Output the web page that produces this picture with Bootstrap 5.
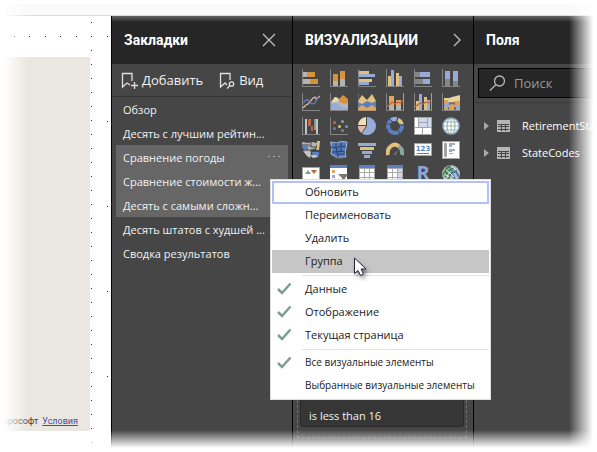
<!DOCTYPE html>
<html lang="ru">
<head>
<meta charset="utf-8">
<meta name="viewport" content="width=device-width, initial-scale=1">
<title>Закладки</title>
<link href="https://cdn.jsdelivr.net/npm/bootstrap@5.3.0/dist/css/bootstrap.min.css" rel="stylesheet">
<style>
body { font-family: "Open Sans", "Noto Sans", sans-serif; font-size: 12px; line-height: 24px; background: #fff; }
button { font: inherit; }
.window-frame { min-height: 100vh; padding: 4px; }
.top-strip { height: 12px; background: #fafafa; border-bottom: 1px solid #dcdcdc; }
.pane { background: #464646; color: #f2f2f2; border-left: 1px solid #000; }
.pane-head { height: 48px; padding: 0 12px; background: linear-gradient(#666, #262626 6px); }
.pane-title { font: 700 14px/24px Roboto, sans-serif; color: #fff; margin: 0; }
.pane-head svg { display: block; }
.plain-btn { background: none; border: 0; padding: 0; color: inherit; }

.report-canvas { width: 107px; background: #fff; overflow: hidden; }
.report-canvas svg.grid-dots { position: absolute; left: 0; top: 0; width: 107px; height: 100%; }
.report-page { width: 86px; margin: 41px 0 17px; padding-right: 12px; background: #eae7e0; font: 9px/20px Roboto, sans-serif; color: #444; }
.report-links { gap: 4px; }
.report-page a { color: #4a4aa0; }

.pane-bookmarks { width: 181px; }
.bookmark-tools { height: 33px; padding: 0 9px; border-bottom: 1px solid #363636; font-size: 13px; }
.bookmark-list { padding: 0 4px; font-size: 11px; line-height: 26px; }
.bookmark-item { display: flex; width: 100%; height: 24px; padding: 0 7px; text-align: left; }
.bookmark-item.active { background: #666; }

.pane-visuals { width: 181px; }
.visual-grid { display: grid; grid-template-columns: repeat(6, 18px); gap: 6px 10px; padding: 5px 9px; }
.visual-grid button { height: 18px; }
.visual-grid svg { display: block; width: 18px; height: 18px; }
.filter-zone { margin: 0 6px 10px 4px; padding: 0 2px 10px; border: 1px dashed #6e6e6e; }
.filter-card { min-height: 120px; padding: 0 8px; background: #363636; border: 1px solid #2a2a2a; border-radius: 3px; font-size: 11px; line-height: 20px; }

.search-box { margin: 4px 0 4px 4px; height: 30px; padding: 0 10px; background: #262626; border: 1px solid #000; }
.search-box input { font-size: 13px; line-height: 24px; background: none; border: 0; padding: 0; color: #fff; min-width: 0; outline: 0; }
.search-box input::placeholder { color: #999; opacity: 1; }
.field-list { border-top: 1px solid #3a3a3a; padding: 9px 0 0 10px; font-size: 11px; }
.field-item { height: 27px; white-space: nowrap; color: #fff; }
.field-item svg { flex: none; }

.edge-fade { position: absolute; pointer-events: none; }
.fade-left { left: 0; top: 0; bottom: 0; width: 28px; background: linear-gradient(90deg, #fff 4px, rgba(255,255,255,0)); }
.fade-right { right: 0; top: 0; bottom: 0; width: 28px; background: linear-gradient(270deg, #fff 4px, rgba(255,255,255,0)); }
.fade-bottom { left: 0; right: 0; bottom: 0; height: 22px; background: linear-gradient(0deg, #fff 4px, rgba(255,255,255,0)); }

.context-menu { position: absolute; left: 270px; top: 179px; min-width: 221px; padding: 1px; background: #fff; border: 1px solid #dedede; color: #222; list-style: none; z-index: 5; line-height: 17px; font-size: 11px; }
.context-menu button { display: flex; align-items: center; width: 100%; height: 23px; padding: 0 9px 2px 3px; border: 2px solid transparent; background: none; color: #222; white-space: nowrap; }
.context-menu .tick { width: 28px; flex: none; display: flex; }
.context-menu .scope { font-size: 10px; }
.context-menu .focused { border-color: #b1c1f8; }
.context-menu .hovered { background: #c6c6c6; }
.context-menu .menu-rule { height: 1px; margin: 2px 0 2px 30px; background: #e3e3e3; }
.mouse-pointer { position: absolute; left: 353px; top: 257px; z-index: 6; pointer-events: none; filter: drop-shadow(2px 3px 2px rgba(0,0,0,.4)); }
</style>
<script src="https://cdn.jsdelivr.net/npm/bootstrap@5.3.0/dist/js/bootstrap.bundle.min.js"></script>
</head>
<body>
<div class="window-frame position-relative d-flex flex-column overflow-hidden">
  <div class="top-strip"></div>
  <div class="d-flex flex-grow-1">

    <main class="report-canvas position-relative d-flex flex-column flex-shrink-0">
      <div class="report-page flex-grow-1 d-flex align-items-end justify-content-end">
        <div class="report-links d-flex text-nowrap"><span>крософт</span><a href="#">Условия</a></div>
      </div>
      <svg class="grid-dots pe-none" aria-hidden="true">
        <defs>
          <pattern id="dotsV" x="87" y="20" width="20" height="14" patternUnits="userSpaceOnUse"><rect width="1" height="1" fill="#222"/></pattern>
          <pattern id="dotsW" x="103" y="20" width="20" height="85" patternUnits="userSpaceOnUse"><rect width="1" height="1" fill="#222"/></pattern>
        </defs>
        <rect x="87" y="0" width="1" height="100%" fill="url(#dotsV)"/>
        <rect x="103" y="0" width="1" height="100%" fill="url(#dotsW)"/>
        <path d="M10 20h1v1h-1zM25 20h1v1h-1zM41 20h1v1h-1zM56 20h1v1h-1zM72 20h1v1h-1z" fill="#222"/>
      </svg>
    </main>

    <section class="pane pane-bookmarks flex-shrink-0">
      <header class="pane-head d-flex align-items-center justify-content-between">
        <h2 class="pane-title">Закладки</h2>
        <button class="plain-btn me-1" aria-label="Закрыть"><svg width="14" height="14" viewBox="0 0 14 14"><path d="M1 1l12 12M13 1L1 13" stroke="#c4c4c4" stroke-width="1.2"/></svg></button>
      </header>
      <div class="bookmark-tools d-flex align-items-center gap-3">
        <button class="plain-btn d-flex align-items-center gap-1"><svg width="17" height="17" viewBox="0 0 17 17" fill="none" stroke="#e0e0e0" stroke-width="1.3"><path d="M9 13l-3-2-4.500 4V1.500h9.500V9"/><path d="M13.500 10v7M10 13.500h7"/></svg><span>Добавить</span></button>
        <button class="plain-btn d-flex align-items-center gap-1"><svg width="16" height="17" viewBox="0 0 16 17" fill="none" stroke="#e0e0e0" stroke-width="1.3"><path d="M8 13l-2-2-4.500 4V1.500h9.500V8"/><circle cx="12.500" cy="12" r="2.200"/><path d="M11 13.500L8 16.500"/></svg><span>Вид</span></button>
      </div>
      <div class="bookmark-list">
        <button class="plain-btn bookmark-item">Обзор</button>
        <button class="plain-btn bookmark-item">Десять с лучшим рейтин...</button>
        <button class="plain-btn bookmark-item active justify-content-between"><span>Сравнение погоды</span><svg width="13" height="24" aria-hidden="true"><path d="M0 11h2v1H0zM5 11h2v1H5zM10 11h2v1h-2z" fill="#aaa"/></svg></button>
        <button class="plain-btn bookmark-item active">Сравнение стоимости ж...</button>
        <button class="plain-btn bookmark-item active">Десять с самыми сложн...</button>
        <button class="plain-btn bookmark-item">Десять штатов с худшей ...</button>
        <button class="plain-btn bookmark-item">Сводка результатов</button>
      </div>
    </section>

    <section class="pane pane-visuals flex-shrink-0 d-flex flex-column">
      <header class="pane-head d-flex align-items-center justify-content-between">
        <h2 class="pane-title">ВИЗУАЛИЗАЦИИ</h2>
        <button class="plain-btn" aria-label="Свернуть"><svg width="8" height="14" viewBox="0 0 8 14"><path d="M1 1l6 6-6 6" fill="none" stroke="#c4c4c4" stroke-width="1.300"/></svg></button>
      </header>
      <div class="visual-grid">
        <button class="plain-btn" aria-label="Линейчатая с накоплением"><svg viewBox="0 0 18 18" shape-rendering="crispEdges"><path d="M0 0h1v17h17v1H0z" fill="#858585"/><path d="M1 3h4v5H1zM1 10h7v5H1z" fill="#b4b4b4"/><path d="M5 3h8v5H5zM8 10h8v5H8z" fill="#d8923e"/></svg></button>
        <button class="plain-btn" aria-label="Гистограмма с накоплением"><svg viewBox="0 0 18 18" shape-rendering="crispEdges"><path d="M0 0h1v17h17v1H0z" fill="#858585"/><path d="M3 12h5v5H3zM10 10h5v7h-5z" fill="#b4b4b4"/><path d="M3 5h5v7H3zM10 2h5v8h-5z" fill="#d8923e"/></svg></button>
        <button class="plain-btn" aria-label="Линейчатая с группировкой"><svg viewBox="0 0 18 18" shape-rendering="crispEdges"><path d="M0 0h1v17h17v1H0z" fill="#858585"/><path d="M1 2h10v3H1zM1 10h13v3H1z" fill="#e0c27c"/><path d="M1 5h16v3H1zM1 13h10v3H1z" fill="#97abd6"/></svg></button>
        <button class="plain-btn" aria-label="Гистограмма с группировкой"><svg viewBox="0 0 18 18" shape-rendering="crispEdges"><path d="M0 0h1v17h17v1H0z" fill="#858585"/><path d="M2 7h3v10H2zM10 4h3v13h-3z" fill="#e0c27c"/><path d="M5 1h3v16H5zM13 7h3v10h-3z" fill="#97abd6"/></svg></button>
        <button class="plain-btn" aria-label="Нормированная линейчатая"><svg viewBox="0 0 18 18" shape-rendering="crispEdges"><path d="M0 0h1v17h17v1H0zM1 3h5v5H1zM1 10h8v5H1z" fill="#858585"/><path d="M6 3h10v5H6zM9 10h7v5H9z" fill="#97abd6"/></svg></button>
        <button class="plain-btn" aria-label="Нормированная гистограмма"><svg viewBox="0 0 18 18" shape-rendering="crispEdges"><path d="M0 0h1v17h17v1H0zM3 10h5v7H3zM11 12h5v5h-5z" fill="#858585"/><path d="M3 2h5v8H3zM11 2h5v10h-5z" fill="#97abd6"/></svg></button>

        <button class="plain-btn" aria-label="График"><svg viewBox="0 0 18 18"><path d="M0 0h1v17h17v1H0z" fill="#858585"/><g fill="none" stroke-width="1.300"><path d="M1 15l3-3 2-1 5-6 2-1 1 2 4-3" stroke="#e3b9a2"/><path d="M1 10l3-3h2l4 4 3-1 2-4 3-2" stroke="#5c7fc0"/></g></svg></button>
        <button class="plain-btn" aria-label="Диаграмма с областями"><svg viewBox="0 0 18 18"><path d="M1 9l4-5 4 2 4-4 5 4v11H1z" fill="#d8923e"/><path d="M1 10l4-6 3 1 2 4 4 2 4-1v7H1z" fill="#b4b8bd"/><path d="M1 9l4-5 3 1 1 3-4 1z" fill="#e8d9ab"/><path d="M1 11l5-1 4 3 4 2h4v2H1z" fill="#97abd6"/><path d="M0 0h1v17h17v1H0z" fill="#858585"/></svg></button>
        <button class="plain-btn" aria-label="Диаграмма с областями с накоплением"><svg viewBox="0 0 18 18"><path d="M0 8l4-6 5 5 5-6 4 7v9H0z" fill="#e0c27c"/><path d="M0 9l4 2 5-3 5 2 4-2v9H0z" fill="#5c7fc0"/><path d="M0 15l4-3 5 3 5-3 4 3v3H0z" fill="#dfa765"/><path d="M0 0v18h18" fill="none" stroke="#858585"/></svg></button>
        <button class="plain-btn" aria-label="График и гистограмма с накоплением"><svg viewBox="0 0 18 18"><path d="M3 12h5v5H3zM10 12h5v5h-5z" fill="#b4b4b4"/><path d="M3 3h5v9H3zM10 7h5v5h-5z" fill="#e0a660"/><path d="M1 14l5-5 3 2 3-2 2 1 4-3" fill="none" stroke="#c4633c" stroke-width="1.300"/><path d="M0 0h1v17h17v1H0z" fill="#858585"/><path d="M17 0h1v17h-1z" fill="#d8923e"/></svg></button>
        <button class="plain-btn" aria-label="График и гистограмма с группировкой"><svg viewBox="0 0 18 18"><path d="M2 8h3v9H2zM10 4h3v13h-3z" fill="#e0c27c"/><path d="M5 1h3v16H5zM13 7h3v10h-3z" fill="#97abd6"/><path d="M1 14l5-4 3 1 3-2 2 1 4-3" fill="none" stroke="#c4633c" stroke-width="1.300"/><path d="M0 0h1v17h17v1H0z" fill="#858585"/><path d="M17 0h1v17h-1z" fill="#d8923e"/></svg></button>
        <button class="plain-btn" aria-label="Ленточная диаграмма"><svg viewBox="0 0 18 18"><path d="M2 5h5l3-1 8-2v6l-6 1-5 1H2z" fill="#e8d3a0"/><path d="M2 9h5l3 1 4-2h4v9H2z" fill="#97abd6"/><path d="M2 7h4v4H2zM2 14h4v3H2zM14 8h4v4h-4zM7 13l3-3 3 3-3 4H7z" fill="#dfa255"/><path d="M7 9l3 1 3-1v3l-3-1-3 1zM12 14h2v3h-2zM6 14h1v3H6z" fill="#8a6a50"/><path d="M0 0h1v17h17v1H0z" fill="#858585"/></svg></button>

        <button class="plain-btn" aria-label="Каскадная диаграмма"><svg viewBox="0 0 18 18" shape-rendering="crispEdges"><path d="M0 0h1v17h17v1H0zM13 2h3v1h-3z" fill="#858585"/><path d="M3 2h2v15H3zM14 2h2v15h-2z" fill="#c4c4c4"/><path d="M6 2h3v7H6zM9 9h2v5H9z" fill="#c4633c"/><path d="M12 2h2v11h-2z" fill="#7f9f92"/></svg></button>
        <button class="plain-btn" aria-label="Точечная диаграмма"><svg viewBox="0 0 18 18"><path d="M0 0h1v17h17v1H0z" fill="#858585"/><circle cx="4.500" cy="5.500" r="1.500" fill="#d06a42"/><circle cx="12.500" cy="4.500" r="1.500" fill="#8aa99c"/><circle cx="4.500" cy="11.500" r="1.500" fill="#5c7fc0"/><circle cx="9.500" cy="9.500" r="1.500" fill="#e0c27c"/><circle cx="16.500" cy="9.500" r="1.500" fill="#7b96cc"/><circle cx="12.500" cy="13.500" r="1.500" fill="#858585"/></svg></button>
        <button class="plain-btn" aria-label="Круговая диаграмма"><svg viewBox="0 0 18 18"><path d="M9 9V0a9 9 0 1 1-5 16.500z" fill="#97abd6"/><path d="M8 8H0a8.500 8.500 0 0 1 8-8z" fill="#ece0b8"/><path d="M8 9l-4.500 7A8.500 8.500 0 0 1 0 9z" fill="#e2b9a4"/></svg></button>
        <button class="plain-btn" aria-label="Кольцевая диаграмма"><svg viewBox="0 0 18 18" fill="none" stroke-width="4"><circle cx="9" cy="9" r="7" stroke="#5c7fc0"/><path d="M5 3.300A7 7 0 0 1 11 2.300" stroke="#97abd6"/><path d="M12 2.700A7 7 0 0 1 15.800 7" stroke="#e0c27c"/><path d="M12 0l-1.500 5M4 2l3 3M14 8h4M3 12l-3 2M12 13l2 4M0 7h4" stroke="#464646" stroke-width="1"/></svg></button>
        <button class="plain-btn" aria-label="Диаграмма дерева"><svg viewBox="0 0 18 18" shape-rendering="crispEdges"><path fill="#a4a4a4" d="M0 0h18v18H0z"/><path fill="#fff" d="M1 1h3v9H1zM1 11h7v6H1zM9 11h8v6H9z"/><path fill="#cfdaf0" d="M5 1h8v4H5zM5 6h8v4H5zM14 1h3v9h-3z"/></svg></button>
        <button class="plain-btn" aria-label="Карта"><svg viewBox="0 0 18 18" fill="none"><circle cx="9" cy="9" r="8" fill="#fff" stroke="#8fa7d6" stroke-width="1.500"/><ellipse cx="9" cy="9" rx="4" ry="8" stroke="#8aa79d"/><path d="M9 1v16M1 9h16M2 5h14M2 13h14" stroke="#8aa79d" stroke-width=".8"/></svg></button>

        <button class="plain-btn" aria-label="Заполненная карта"><svg viewBox="0 0 18 18"><path d="M0 1l6 1 4-1 5 1-1 5-5 2-1 3H4L0 5z" fill="#b4b4b4"/><path d="M0 5h6v4H2zM10 11h7v4l-6 1z" fill="#5c7fc0"/><path d="M15 0h3l-1 9h-3l1-3z" fill="#e0c27c"/><path d="M1 10l8 1-1 6-3-2zM8 14h6l2 2-5 1z" fill="#c6c6c6"/><path d="M0 4h7l2 2h6M3 9h10M9 1v4" stroke="#464646" fill="none"/></svg></button>
        <button class="plain-btn" aria-label="Фигура карты"><svg viewBox="0 0 18 18"><path d="M.500 1l6 1 4-1.500 6.500.500-1 7-1 3 1 5H6l-5-3 1-5z" fill="#5475b5" stroke="#9fb7e0"/><path d="M1 6l6 1 3-2 6 1M6 2v4l1 5 1 5M11 2v8l-5 1H2M10 10l5 1M8 13h7" fill="none" stroke="#28406e"/><path d="M4 18h9" stroke="#686868"/></svg></button>
        <button class="plain-btn" aria-label="Воронка"><svg viewBox="0 0 18 18" shape-rendering="crispEdges"><path d="M0 2h18v3H0zM4 10h10v3H4zM6 14h6v3H6z" fill="#97abd6"/><path d="M2 6h14v3H2z" fill="#e0c27c"/></svg></button>
        <button class="plain-btn" aria-label="Датчик"><svg viewBox="0 0 18 18" fill="none" stroke-width="4"><path d="M2 14a7 8 0 0 1 11-8.500" stroke="#e0c27c"/><path d="M13 5.500a7 8 0 0 1 3 8.500" stroke="#8aa99c"/><path d="M7 14l5-5-2 5z" fill="#777" stroke="none"/></svg></button>
        <button class="plain-btn" aria-label="Карточка 123"><svg viewBox="0 0 18 18"><path d="M.500 2.500h17v12H.500z" fill="#fff" stroke="#a4a4a4"/><text x="9" y="10" text-anchor="middle" font-family="DejaVu Sans, sans-serif" font-size="7" font-weight="700" fill="#5c7fc0">123</text><path d="M3 12h12v1H3z" fill="#777"/></svg></button>
        <button class="plain-btn" aria-label="Многострочная карточка"><svg viewBox="0 0 18 18" shape-rendering="crispEdges"><path fill="#a4a4a4" d="M0 0h18v18H0z"/><path fill="#fff" d="M1 1h16v16H1z"/><path d="M2 2h3v14H2zM7 4h3v1H7zM7 10h3v1H7z" fill="#a4a4a4"/><path d="M7 2h6v2H7zM7 5h3v1H7zM7 8h6v2H7zM7 12h4v1H7z" fill="#97abd6"/></svg></button>

        <button class="plain-btn" aria-label="КПЭ"><svg viewBox="0 0 18 18"><path d="M.500 2.500h17v13H.500z" fill="#fff" stroke="#a4a4a4"/><path d="M3 9l3-4 3 4z" fill="#7f9f92"/><path d="M9 5h6l-3 4z" fill="#c4633c"/></svg></button>
        <button class="plain-btn" aria-label="Срез"><svg viewBox="0 0 18 18"><path d="M0 0h17v18H0z" fill="#fff"/><path d="M0 0h17v3H0z" fill="#5c7fc0"/><path d="M2 5h3v3H2z" fill="#e0a660"/><path d="M2 10h3v3H2z" fill="#97abd6"/><path d="M8 9h11l-4 4v4h-3v-4z" fill="#777"/></svg></button>
        <button class="plain-btn" aria-label="Таблица"><svg viewBox="0 0 18 18" shape-rendering="crispEdges"><path d="M1 0h16v18H1z" fill="#aaa"/><path d="M1 0h16v3H1z" fill="#5c7fc0"/><path d="M2 4h4v3H2zM7 4h4v3H7zM12 4h4v3h-4zM2 8h4v4H2zM7 8h4v4H7zM12 8h4v4h-4zM2 13h4v4H2zM7 13h4v4H7zM12 13h4v4h-4z" fill="#fff"/></svg></button>
        <button class="plain-btn" aria-label="Матрица"><svg viewBox="0 0 18 18" shape-rendering="crispEdges"><path d="M1 0h16v18H1z" fill="#aaa"/><path d="M1 0h16v3H1z" fill="#5c7fc0"/><path d="M2 4h4v3H2zM7 4h4v3H7zM2 8h4v4H2zM7 8h4v4H7zM2 13h4v4H2zM7 13h4v4H7z" fill="#fff"/><path d="M12 4h4v3h-4zM12 8h4v4h-4zM12 13h4v4h-4z" fill="#cfdaf0"/></svg></button>
        <button class="plain-btn" aria-label="Сценарий R"><svg viewBox="0 0 18 18"><text x="9" y="15" text-anchor="middle" font-family="Open Sans, sans-serif" font-size="20" font-weight="700" fill="#8fa7d6">R</text></svg></button>
        <button class="plain-btn" aria-label="Карта ArcGIS"><svg viewBox="0 0 18 18" fill="none"><circle cx="9" cy="9" r="9" fill="#b9bfc0"/><path d="M1 10l4-7 4-2M3 12l3-6 6-3M6 14l3-6 6-2" stroke="#3f7f45" stroke-width="2"/><path d="M10 9l3 5M13 5l4 7M8 3l4 5" stroke="#4f79bd" stroke-width="2"/><path d="M4 5l4 3 4 4M2 9l5 3M9 1l5 4" stroke="#eee"/></svg></button>
      </div>
      <div class="filter-zone mt-auto">
        <div class="filter-card d-flex align-items-end">is less than 16</div>
      </div>
    </section>

    <section class="pane flex-grow-1 overflow-hidden">
      <header class="pane-head d-flex align-items-center"><h2 class="pane-title">Поля</h2></header>
      <label class="search-box d-flex align-items-center gap-2">
        <svg class="flex-shrink-0" width="17" height="17" viewBox="0 0 17 17" fill="none" stroke="#b8b8b8" stroke-width="1.300"><circle cx="10.500" cy="6" r="5"/><path d="M7 9.500L1 15.500"/></svg>
        <input class="flex-grow-1" type="text" placeholder="Поиск" aria-label="Поиск">
      </label>
      <div class="field-list">
        <div class="field-item d-flex align-items-center"><svg class="me-2" width="5" height="8"><path d="M0 0l5 4-5 4z" fill="#a8a8a8"/></svg><svg class="me-2" width="13" height="12" shape-rendering="crispEdges"><path d="M0 0h13v12H0z" fill="#b4b4b4"/><path d="M1 4h3v1H1zM5 4h3v1H5zM9 4h3v1H9zM1 6h11v1H1zM1 9h11v1H1zM4 4h1v7H4zM8 4h1v7H8z" fill="#464646"/></svg><span class="ms-1">RetirementSta</span></div>
        <div class="field-item d-flex align-items-center"><svg class="me-2" width="5" height="8"><path d="M0 0l5 4-5 4z" fill="#a8a8a8"/></svg><svg class="me-2" width="13" height="12" shape-rendering="crispEdges"><path d="M0 0h13v12H0z" fill="#b4b4b4"/><path d="M1 4h3v1H1zM5 4h3v1H5zM9 4h3v1H9zM1 6h11v1H1zM1 9h11v1H1zM4 4h1v7H4zM8 4h1v7H8z" fill="#464646"/></svg><span class="ms-1">StateCodes</span></div>
      </div>
    </section>
  </div>

  <div class="edge-fade fade-left"></div>
  <div class="edge-fade fade-right"></div>
  <div class="edge-fade fade-bottom"></div>

  <ul class="context-menu m-0">
    <li><button class="focused"><span class="tick"></span>Обновить</button></li>
    <li><button><span class="tick"></span>Переименовать</button></li>
    <li><button><span class="tick"></span>Удалить</button></li>
    <li><button class="hovered"><span class="tick"></span>Группа</button></li>
    <li class="menu-rule"></li>
    <li><button><span class="tick"><svg width="15" height="13" viewBox="0 0 15 13"><path d="M1 7l4 4 8.500-9.500" fill="none" stroke="#7a9f8f" stroke-width="2.500"/></svg></span>Данные</button></li>
    <li><button><span class="tick"><svg width="15" height="13" viewBox="0 0 15 13"><path d="M1 7l4 4 8.500-9.500" fill="none" stroke="#7a9f8f" stroke-width="2.500"/></svg></span>Отображение</button></li>
    <li><button><span class="tick"><svg width="15" height="13" viewBox="0 0 15 13"><path d="M1 7l4 4 8.500-9.500" fill="none" stroke="#7a9f8f" stroke-width="2.500"/></svg></span>Текущая страница</button></li>
    <li class="menu-rule"></li>
    <li><button class="scope"><span class="tick"><svg width="15" height="13" viewBox="0 0 15 13"><path d="M1 7l4 4 8.500-9.500" fill="none" stroke="#7a9f8f" stroke-width="2.500"/></svg></span>Все визуальные элементы</button></li>
    <li><button class="scope"><span class="tick"></span>Выбранные визуальные элементы</button></li>
  </ul>
  <svg class="mouse-pointer" width="14" height="20" viewBox="0 0 14 20"><path d="M1.500 1v15.500l3.500-3 2.500 5 3-1.500-2.500-5H13z" fill="#fff" stroke="#1f2340"/></svg>
</div>
</body>
</html>
